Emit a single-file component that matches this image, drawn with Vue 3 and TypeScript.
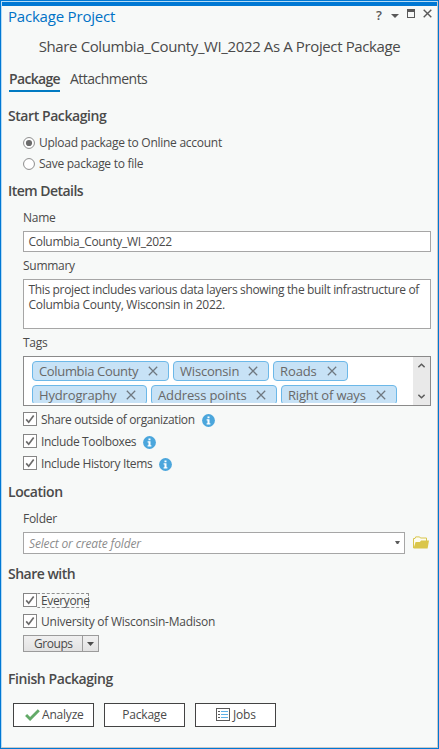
<script setup lang="ts">
import { ref } from 'vue'

interface Tag { label: string; cls: string }

const tagRows: Tag[][] = [
  [
    { label: 'Columbia County', cls: 'columbia' },
    { label: 'Wisconsin', cls: 'wisconsin' },
    { label: 'Roads', cls: 'roads' },
  ],
  [
    { label: 'Hydrography', cls: 'hydro' },
    { label: 'Address points', cls: 'address' },
    { label: 'Right of ways', cls: 'right' },
  ],
]

const options = [
  { label: 'Share outside of organization', cls: 'opt-share' },
  { label: 'Include Toolboxes', cls: 'opt-tool' },
  { label: 'Include History Items', cls: 'opt-history' },
]

const destination = ref(0)
const destinations = ['Upload package to Online account', 'Save package to file']
</script>

<template>
  <div class="window">
    <div class="accent"></div>
    <header class="titlebar">
      <h1>Package Project</h1>
      <div class="controls">
        <span class="help">?</span>
        <svg class="caret" width="8" height="4" viewBox="0 0 8 4"><path d="M0 0h8L4 4z" fill="#595959" /></svg>
        <svg class="max" width="8" height="9" viewBox="0 0 8 9"><path d="M0 0h8v9H0zM1 3v5h6V3z" fill="#595959" fill-rule="evenodd" /></svg>
        <svg class="close" width="9" height="9" viewBox="0 0 9 9"><path d="M.7.7l7.6 7.6M8.3.7L.7 8.3" stroke="#595959" stroke-width="1.4" /></svg>
      </div>
    </header>
    <div class="headline">Share Columbia_County_WI_2022 As A Project Package</div>

    <nav class="tabs">
      <span class="tab active">Package</span>
      <span class="tab">Attachments</span>
    </nav>

    <h2 class="start">Start Packaging</h2>
    <div class="radios">
      <div v-for="(d, i) in destinations" :key="d" class="radio" @click="destination = i">
        <svg width="12" height="12" viewBox="0 0 12 12">
          <circle cx="6" cy="6" r="5.45" fill="#fff" stroke="#8c8c8c" />
          <circle v-if="destination === i" cx="6" cy="6" r="3.1" fill="#6b6b6b" />
        </svg>
        <span>{{ d }}</span>
      </div>
    </div>

    <h2 class="details">Item Details</h2>
    <section class="group">
      <div class="label name-label">Name</div>
      <div class="field name">Columbia_County_WI_2022</div>
      <div class="label summary-label">Summary</div>
      <div class="field summary">
        <div class="line1">This project includes various data layers showing the built infrastructure of</div>
        <div class="line2">Columbia County, Wisconsin in 2022.</div>
      </div>
      <div class="label tags-label">Tags</div>
      <div class="tagbox">
        <div class="taglist">
          <div v-for="(row, r) in tagRows" :key="r" class="tagrow">
            <div v-for="t in row" :key="t.label" class="tag" :class="t.cls">
              <span>{{ t.label }}</span>
              <svg width="10" height="10" viewBox="0 0 10 10"><path d="M.8.8l8.4 8.4M9.2.8L.8 9.2" stroke="#6f7880" stroke-width="1.25" /></svg>
            </div>
          </div>
        </div>
        <div class="scroll">
          <svg width="7" height="5" viewBox="0 0 7 5"><path d="M.4 4.2l3.1-3 3.1 3" fill="none" stroke="#5c5c5c" stroke-width="1.4" /></svg>
          <svg width="7" height="5" viewBox="0 0 7 5"><path d="M.4.8l3.1 3 3.1-3" fill="none" stroke="#5c5c5c" stroke-width="1.4" /></svg>
        </div>
      </div>
      <div class="options">
        <div v-for="o in options" :key="o.label" class="check" :class="o.cls">
          <svg class="box" width="14" height="14" viewBox="0 0 14 14"><rect x=".5" y=".5" width="13" height="13" fill="#fff" stroke="#858585" /><path d="M3.2 7.4l2.5 2.8L10.7 3.4" fill="none" stroke="#6b6b6b" stroke-width="1.7" /></svg>
          <span class="text">{{ o.label }}</span>
          <svg class="info" width="13" height="13" viewBox="0 0 13 13"><circle cx="6.5" cy="6.5" r="6.4" fill="#4ba6dc" /><path d="M5.5 2.4h2v1.8h-2zM4.6 5.3h2.9v4h.9v1.1H4.6V9.3h.9V6.4h-.9z" fill="#fff" /></svg>
        </div>
      </div>
    </section>

    <h2 class="location">Location</h2>
    <section class="group">
      <div class="label folder-label">Folder</div>
      <div class="folder-row">
        <div class="field select">
          <span>Select or create folder</span>
          <svg width="5" height="3" viewBox="0 0 5 3"><path d="M0 0h5L3.2 3H1.8z" fill="#5c5c5c" /></svg>
        </div>
        <svg class="folder" width="16" height="13" viewBox="0 0 16 13"><path d="M.5 12V2.5H2L2.7.9h3.9l.8 1.1h6.1v3" fill="#fdfcf0" stroke="#d8c54c" /><path d="M.5 12.5L2.6 6h4.2l1.4-1.6H16l-1.4 8.1z" fill="#dac64b" /></svg>
      </div>
    </section>

    <h2 class="sharewith">Share with</h2>
    <section class="group shares">
      <div class="check everyone">
        <svg class="box" width="14" height="14" viewBox="0 0 14 14"><rect x=".5" y=".5" width="13" height="13" fill="#fff" stroke="#858585" /><path d="M3.2 7.4l2.5 2.8L10.7 3.4" fill="none" stroke="#6b6b6b" stroke-width="1.7" /></svg>
        <span class="text focused">Everyone</span>
      </div>
      <div class="check university">
        <svg class="box" width="14" height="14" viewBox="0 0 14 14"><rect x=".5" y=".5" width="13" height="13" fill="#fff" stroke="#858585" /><path d="M3.2 7.4l2.5 2.8L10.7 3.4" fill="none" stroke="#6b6b6b" stroke-width="1.7" /></svg>
        <span class="text">University of Wisconsin-Madison</span>
      </div>
      <div class="groups">
        <span class="groups-text">Groups</span>
        <span class="groups-drop"><svg width="7" height="4" viewBox="0 0 7 4"><path d="M0 0h7L3.5 4z" fill="#4c4c4c" /></svg></span>
      </div>
    </section>

    <h2 class="finish">Finish Packaging</h2>
    <footer class="actions">
      <button class="analyze">
        <svg width="15" height="12" viewBox="0 0 15 12"><path d="M1.1 6l4 4L13.8 1.3" fill="none" stroke="#63aa68" stroke-width="2.9" /></svg>
        <span>Analyze</span>
      </button>
      <button class="package"><span>Package</span></button>
      <button class="jobs">
        <svg width="14" height="13" viewBox="0 0 14 13"><rect x=".5" y=".5" width="13" height="12" fill="#fff" stroke="#5a5a5a" /><path d="M2 3.5h2M2 6.5h2M2 9.5h2" stroke="#5a5a5a" /><path d="M5 3.5h7M5 6.5h7M5 9.5h7" stroke="#5fb0e6" /></svg>
        <span>Jobs</span>
      </button>
    </footer>
  </div>
</template>

<style>
body { margin: 0; }
</style>

<style scoped>
.window {
  box-sizing: border-box;
  width: 439px;
  height: 749px;
  background: #f7f9f8;
  border: 1px solid #0078d4;
  box-shadow: inset -1px -1px 0 #c9c9c9, inset 1px 1px 0 #b5dbf5;
  color: #4a4a4a;
  font: 12px/17px "Open Sans", "Noto Sans", sans-serif;
  letter-spacing: -0.27px;
  white-space: nowrap;
  overflow: hidden;
}
.accent { height: 4px; margin: 1px 1px 0; background: #0078d4; }
.titlebar { display: flex; justify-content: space-between; height: 20px; padding: 0 6px 0 7px; }
h1 { margin: 0; font-size: 15px; line-height: 20px; font-weight: 400; letter-spacing: -0.2px; color: #0072c6; }
.controls { display: flex; align-items: flex-start; padding-top: 3px; }
.help { width: 8px; margin-right: -1px; font-size: 13px; line-height: 13px; font-weight: 600; color: #595959; }
.caret { margin: 5px 0 0 8px; }
.max { margin: 0 0 0 8px; }
.close { margin: 0 0 0 8px; }
.headline { margin-top: 10px; text-align: center; font-size: 15px; line-height: 20px; letter-spacing: -0.38px; }
.tabs { display: flex; gap: 10px; margin: 13px 0 0 8px; font-size: 14px; line-height: 19px; }
.tab { height: 21px; letter-spacing: -0.52px; }
.tab.active { width: 51px; font-weight: 600; letter-spacing: -0.66px; border-bottom: 2px solid #007ac2; }
h2 { margin: 0 0 0 7px; font-size: 14px; line-height: 19px; font-weight: 600; letter-spacing: -0.43px; }
.start { margin-top: 14px; }
.radios { display: flex; flex-direction: column; gap: 4px; margin: 9px 0 0 22px; }
.radio { display: flex; align-items: flex-start; gap: 4px; height: 17px; }
.radio svg { margin-top: 3px; }
.details { margin-top: 9px; letter-spacing: -0.53px; }
.group { margin-left: 22px; }
.label { height: 17px; }
.name-label { margin-top: 9px; }
.field { box-sizing: border-box; width: 408px; background: #fff; border: 1px solid #a6a6a6; padding-left: 4.5px; }
.name { height: 21px; margin-top: 5px; padding-top: 1px; letter-spacing: -0.32px; }
.summary-label { margin-top: 5px; }
.summary { height: 50px; margin-top: 5px; padding-top: 2px; line-height: 15px; }
.line1 { letter-spacing: -0.342px; }
.tags-label { margin-top: 5px; }
.tagbox { box-sizing: border-box; display: flex; width: 408px; height: 50px; margin-top: 5px; border: 1px solid #8a8a8a; background: #fff; }
.taglist { box-sizing: border-box; flex: 1; height: 46px; padding: 4px 0 0 8px; overflow: hidden; display: flex; flex-direction: column; gap: 4px; }
.tagrow { display: flex; gap: 4px; }
.tag { box-sizing: border-box; display: flex; justify-content: space-between; flex: none; height: 20px; padding: 0 10px 0 6px; border: 1px solid #6cb8e8; border-radius: 4px; background: #c7e2f6; color: #686868; font-size: 13px; line-height: 18px; }
.tag svg { margin-top: 4px; }
.columbia { width: 137px; letter-spacing: -0.34px; }
.wisconsin { width: 96px; letter-spacing: -0.2px; }
.roads { width: 75px; letter-spacing: -0.1px; }
.hydro { width: 115px; letter-spacing: -0.16px; }
.address { width: 126px; letter-spacing: -0.13px; }
.right { width: 116px; letter-spacing: -0.17px; }
.scroll { display: flex; flex-direction: column; justify-content: space-between; align-items: center; width: 17px; box-sizing: border-box; padding: 6px 0; background: #e9e9e9; }
.options { display: flex; flex-direction: column; gap: 5px; margin-top: 5px; }
.check { display: flex; align-items: flex-start; height: 17px; }
.box { margin-top: 1px; }
.text { padding-left: 4px; }
.info { margin: 3px 0 0 7px; }
.opt-share { letter-spacing: -0.37px; }
.opt-tool { letter-spacing: -0.37px; }
.opt-history { letter-spacing: -0.33px; }
.location { margin-top: 10px; }
.folder-label { margin-top: 9px; }
.folder-row { display: flex; margin-top: 5px; }
.select { display: flex; justify-content: space-between; width: 382px; height: 22px; padding: 2px 4px 0 5px; font-style: italic; color: #8c8c8c; letter-spacing: -0.15px; }
.select svg { margin-top: 6px; }
.folder { margin: 4px 0 0 8px; }
.sharewith { margin-top: 10px; letter-spacing: -0.5px; }
.shares { margin-top: 9px; }
.everyone { letter-spacing: -0.38px; }
.focused { box-sizing: border-box; width: 52px; height: 15px; margin-top: 1px; padding-left: 3px; border: 1px dashed #8f8f8f; border-left-color: transparent; line-height: 13px; }
.university { margin-top: 4px; letter-spacing: -0.24px; }
.groups { box-sizing: border-box; display: flex; width: 76px; height: 17px; margin-top: 5px; border: 1px solid #9b9b9b; background: linear-gradient(#f0f0f0, #e2e2e2); line-height: 15px; letter-spacing: -0.44px; }
.groups-text { box-sizing: border-box; width: 58px; padding-left: 10px; }
.groups-drop { flex: 1; border-left: 1px solid #9b9b9b; display: flex; align-items: center; justify-content: center; }
.finish { margin-top: 17px; letter-spacing: -0.42px; }
.actions { display: flex; gap: 10px; margin: 15px 0 0 12px; }
button { box-sizing: border-box; display: flex; justify-content: center; align-items: flex-start; width: 81px; height: 24px; padding: 2px 0 0; border: 1px solid #434343; background: #fff; color: inherit; font: inherit; letter-spacing: -0.2px; }
.analyze { justify-content: flex-start; padding-left: 11px; gap: 2px; }
.analyze svg { margin-top: 3px; }
.jobs { justify-content: flex-start; padding-left: 20px; gap: 3px; }
.jobs svg { margin-top: 2px; }
</style>
